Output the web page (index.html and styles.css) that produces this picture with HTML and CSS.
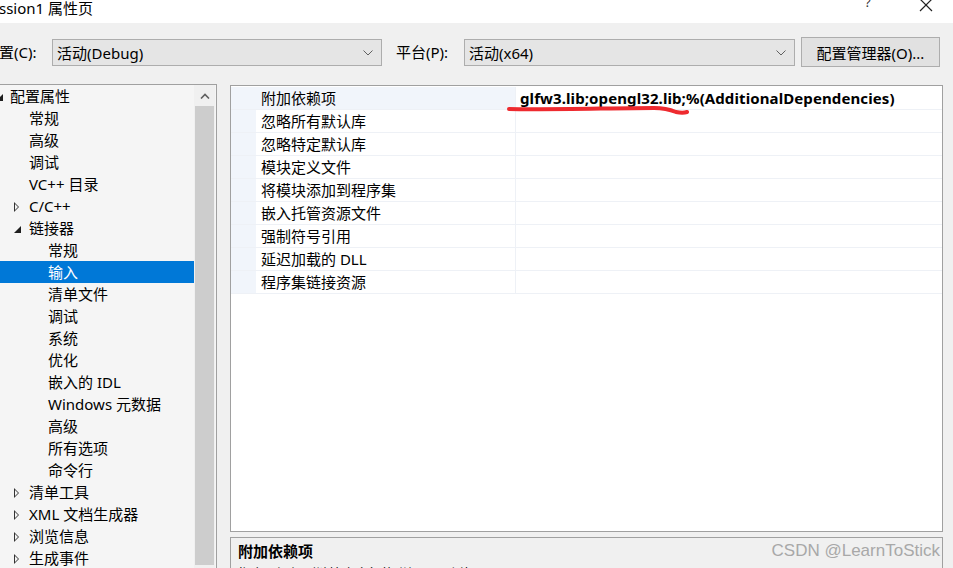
FILE: index.html
```html
<!DOCTYPE html>
<html lang="zh-CN">
<head>
<meta charset="utf-8">
<title>属性页</title>
<link rel="stylesheet" href="styles.css">
</head>
<body>
<div class="window">
  <div class="titlebar">
    <span class="title">ssion1 属性页</span>
    <span class="help">?</span>
    <span class="close">
      <svg width="14" height="14" viewBox="0 0 14 14"><path d="M1 1L13 13M13 1L1 13" stroke="#222" stroke-width="1.2" fill="none"/></svg>
    </span>
  </div>
  <div class="toolbar">
    <span class="label cfg-label">置(C):</span>
    <div class="select sel-cfg"><span>活动(Debug)</span><svg class="chev" width="10" height="6" viewBox="0 0 10 6"><path d="M0.5 0.5L5 5L9.5 0.5" stroke="#606060" fill="none"/></svg></div>
    <span class="label plat-label">平台(P):</span>
    <div class="select sel-plat"><span>活动(x64)</span><svg class="chev" width="10" height="6" viewBox="0 0 10 6"><path d="M0.5 0.5L5 5L9.5 0.5" stroke="#606060" fill="none"/></svg></div>
    <div class="button">配置管理器(O)...</div>
  </div>
  <div class="main">
    <div class="tree">
      <ul class="nodes">
        <li class="l0"><span class="exp open cut"></span>配置属性</li>
        <li class="l1">常规</li>
        <li class="l1">高级</li>
        <li class="l1">调试</li>
        <li class="l1">VC++ 目录</li>
        <li class="l1"><span class="exp closed"></span>C/C++</li>
        <li class="l1"><span class="exp open"></span>链接器</li>
        <li class="l2">常规</li>
        <li class="l2 sel">输入</li>
        <li class="l2">清单文件</li>
        <li class="l2">调试</li>
        <li class="l2">系统</li>
        <li class="l2">优化</li>
        <li class="l2">嵌入的 IDL</li>
        <li class="l2">Windows 元数据</li>
        <li class="l2">高级</li>
        <li class="l2">所有选项</li>
        <li class="l2">命令行</li>
        <li class="l1"><span class="exp closed"></span>清单工具</li>
        <li class="l1"><span class="exp closed"></span>XML 文档生成器</li>
        <li class="l1"><span class="exp closed"></span>浏览信息</li>
        <li class="l1"><span class="exp closed"></span>生成事件</li>
      </ul>
      <div class="scrollbar">
        <div class="sb-up"><svg width="10" height="6" viewBox="0 0 10 6"><path d="M1 5.5L5 1.5L9 5.5" stroke="#606060" stroke-width="1.6" fill="none"/></svg></div>
        <div class="sb-thumb"></div>
      </div>
    </div>
    <div class="right">
      <div class="grid">
        <div class="row first"><div class="gutter"></div><div class="name">附加依赖项</div><div class="value">glfw3.lib;opengl32.lib;%(AdditionalDependencies)</div></div>
        <div class="row"><div class="gutter"></div><div class="name">忽略所有默认库</div><div class="value"></div></div>
        <div class="row"><div class="gutter"></div><div class="name">忽略特定默认库</div><div class="value"></div></div>
        <div class="row"><div class="gutter"></div><div class="name">模块定义文件</div><div class="value"></div></div>
        <div class="row"><div class="gutter"></div><div class="name">将模块添加到程序集</div><div class="value"></div></div>
        <div class="row"><div class="gutter"></div><div class="name">嵌入托管资源文件</div><div class="value"></div></div>
        <div class="row"><div class="gutter"></div><div class="name">强制符号引用</div><div class="value"></div></div>
        <div class="row"><div class="gutter"></div><div class="name">延迟加载的 DLL</div><div class="value"></div></div>
        <div class="row"><div class="gutter"></div><div class="name">程序集链接资源</div><div class="value"></div></div>
        <svg class="mark" width="200" height="14" viewBox="0 0 200 14"><path d="M3 5 C40 6 110 4 148 4 C160 4 165 6 170 8 C175 9 178 9 181 8" stroke="#ee2a2f" stroke-width="4" stroke-linecap="round" fill="none"/></svg>
      </div>
      <div class="desc">
        <div class="desc-title">附加依赖项</div>
        <div class="desc-text">指定要添加到链接命令行的附加项。[例如 kernel32.lib]</div>
        <div class="watermark">CSDN @LearnToStick</div>
      </div>
    </div>
  </div>
</div>
</body>
</html>
```
FILE: styles.css
```css
* { box-sizing: border-box; }
html, body { margin: 0; padding: 0; }
body {
  width: 953px;
  height: 568px;
  overflow: hidden;
  background: #f0f0f0;
  font-family: "Noto Sans", "Noto Sans CJK SC", sans-serif;
  font-size: 15px;
  color: #000;
}
.window { width: 953px; height: 568px; display: flex; flex-direction: column; overflow: hidden; }

.titlebar {
  flex: 0 0 23px;
  height: 23px;
  background: #fff;
  display: flex;
  align-items: flex-start;
  position: relative;
}
.title { margin-left: -1px; margin-top: -2px; font-size: 15px; line-height: 20px; color: #000; }
.help { position: absolute; left: 865px; top: -7px; font-size: 13px; color: #333; }
.close { position: absolute; left: 919px; top: -4px; }

.toolbar {
  flex: 0 0 61px;
  height: 61px;
  display: flex;
  align-items: flex-start;
  padding-top: 16px;
}
.label { line-height: 27px; white-space: nowrap; }
.cfg-label { width: 53px; margin-left: -1px; }
.plat-label { margin-left: 14px; width: 68px; }
.select {
  height: 27px;
  background: #e5e5e5;
  border: 1px solid #adadad;
  display: flex;
  align-items: center;
  justify-content: space-between;
  padding: 0 8px 0 4px;
}
.sel-cfg { width: 330px; }
.sel-plat { width: 331px; }
.chev { margin-top: 1px; }
.button {
  margin-left: 6px;
  margin-top: -2px;
  width: 139px;
  height: 30px;
  border: 1px solid #adadad;
  background: #e1e1e1;
  display: flex;
  align-items: center;
  justify-content: center;
}

.main { flex: 1 1 auto; min-height: 0; display: flex; overflow: hidden; }

.tree {
  width: 217px;
  height: 484px;
  background: #f5f5f5;
  border-top: 1px solid #a0a0a0;
  border-right: 1px solid #a0a0a0;
  display: flex;
}
.nodes { list-style: none; margin: 0; padding: 0; width: 194px; }
.nodes li {
  height: 22px;
  line-height: 22px;
  white-space: nowrap;
  position: relative;
}
.l0 { padding-left: 10px; }
.l1 { padding-left: 29px; }
.l2 { padding-left: 48px; }
.sel { background: #0078d7; color: #fff; }
.exp { position: absolute; top: 7px; width: 0; height: 0; }
.l1 .exp { left: 14px; }
.exp.closed {
  border-top: 5px solid transparent;
  border-bottom: 5px solid transparent;
  border-left: 5px solid #333;
}
.exp.closed::after {
  content: "";
  position: absolute;
  left: -4px;
  top: -3px;
  border-top: 3px solid transparent;
  border-bottom: 3px solid transparent;
  border-left: 3px solid #f5f5f5;
}
.exp.open {
  top: 9px;
  border-left: 7px solid transparent;
  border-bottom: 7px solid #1e1e1e;
}
.l0 .exp.cut { left: -4px; }

.scrollbar {
  width: 21px;
  background: #f0f0f0;
  display: flex;
  flex-direction: column;
  padding-left: 1px;
}
.sb-up { height: 21px; display: flex; align-items: center; justify-content: center; }
.sb-thumb { width: 19px; height: 459px; background: #cdcdcd; margin-top: 0; }

.right {
  margin-left: 13px;
  width: 713px;
  display: flex;
  flex-direction: column;
  padding-top: 1px;
  min-height: 0;
}
.grid {
  flex: 0 0 447px;
  height: 447px;
  background: #fff;
  border: 1px solid #a0a0a0;
  position: relative;
  padding-top: 1px;
}
.row {
  display: flex;
  height: 23px;
  border-bottom: 1px solid #eef1f6;
}
.gutter { width: 25px; background: #f1f5fb; }
.name {
  width: 260px;
  padding-left: 5px;
  line-height: 22px;
  border-right: 1px solid #eef1f6;
  white-space: nowrap;
}
.value {
  flex: 1;
  padding-left: 4px;
  line-height: 22px;
  font-weight: 700;
  white-space: nowrap;
  letter-spacing: 0.1px;
}
.row.first .name { background: #f1f5fb; }
.mark { position: absolute; left: 275px; top: 18px; }

.desc {
  margin-top: 5px;
  flex: 1 0 auto;
  border: 1px solid #a0a0a0;
  border-bottom: none;
  background: #f0f0f0;
  position: relative;
  padding: 3px 0 0 7px;
}
.desc-title { font-weight: 700; line-height: 20px; }
.desc-text { line-height: 20px; font-size: 13px; margin-top: 2px; }
.watermark {
  position: absolute;
  right: 2px;
  top: 3px;
  font-family: "Liberation Sans", sans-serif;
  font-size: 17px;
  color: #a8a8a8;
}
```
